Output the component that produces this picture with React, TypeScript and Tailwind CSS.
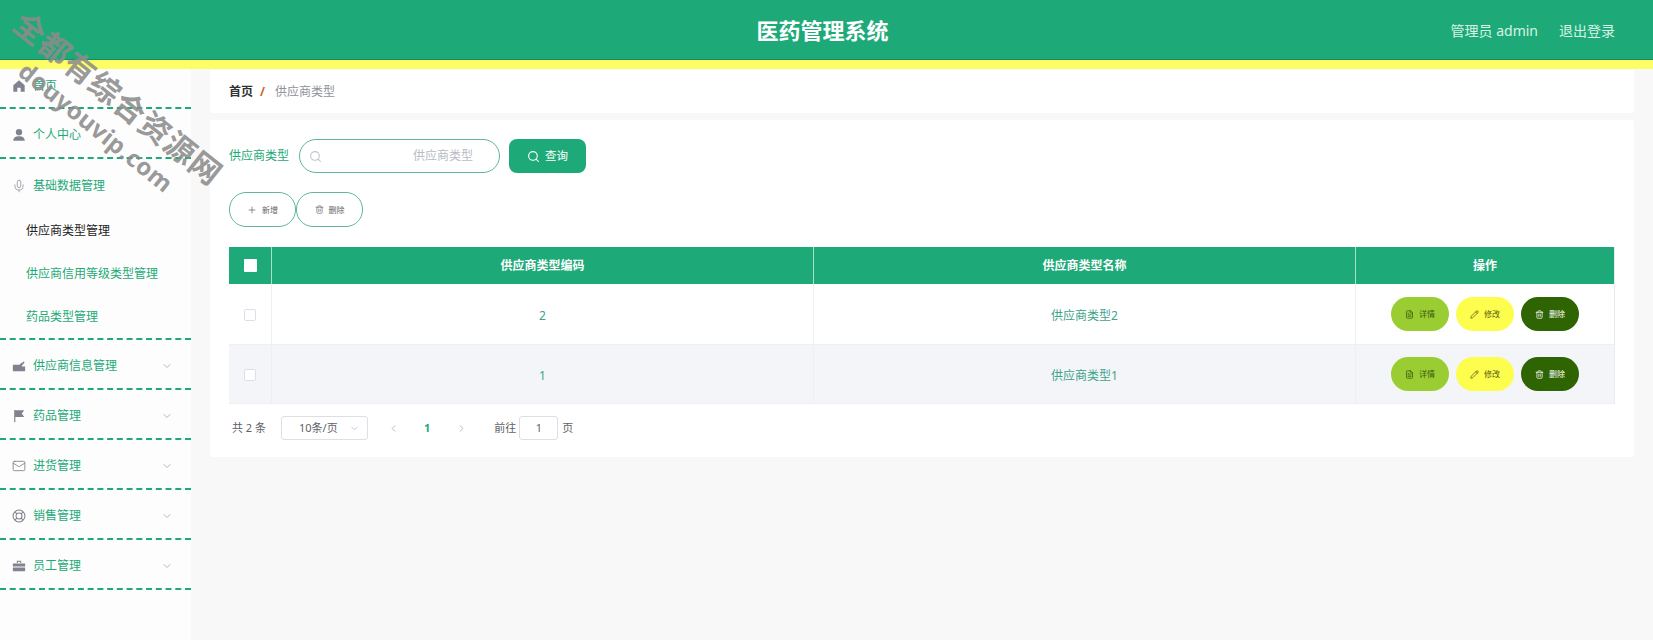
import { ChevronDown, ChevronLeft, ChevronRight, FileText, Mail, Mic, Pencil, Plus, Search, Trash2 } from "lucide-react";
import type { ReactNode } from "react";

function HomeIcon() {
  return (
    <svg viewBox="0 0 16 16" className="h-[14px] w-[14px]" fill="#80838f">
      <path d="M8 1.5 1.5 7v7.5h4.6V10h3.8v4.5h4.6V7z" />
    </svg>
  );
}
function UserIcon() {
  return (
    <svg viewBox="0 0 16 16" className="h-[14px] w-[14px]" fill="#80838f">
      <circle cx="8" cy="4.8" r="3.6" />
      <path d="M1.5 14.5c0-3.4 2.6-5 6.5-5s6.5 1.6 6.5 5z" />
    </svg>
  );
}
function CartIcon() {
  return (
    <svg viewBox="0 0 16 16" className="h-[14px] w-[14px]" fill="#80838f">
      <path d="M1 6.5h7.5L10 5l4-2.5v2L11.5 7v1.5H15V14H1z" />
    </svg>
  );
}
function FlagIcon() {
  return (
    <svg viewBox="0 0 16 16" className="h-[14px] w-[14px]" fill="#80838f">
      <path d="M2.5 1h1.3v14H2.5zM3.8 1.5H14l-2.8 3.6L14 9H3.8z" />
    </svg>
  );
}
function BuoyIcon() {
  return (
    <svg viewBox="0 0 16 16" className="h-[14px] w-[14px]" fill="none" stroke="#80838f" strokeWidth="1.2">
      <circle cx="8" cy="8" r="6.8" />
      <circle cx="8" cy="8" r="3.4" />
      <path d="m3.2 3.2 2.4 2.4m4.8 4.8 2.4 2.4m0-9.6-2.4 2.4m-4.8 4.8-2.4 2.4" />
    </svg>
  );
}
function CaseIcon() {
  return (
    <svg viewBox="0 0 16 16" className="h-[14px] w-[14px]" fill="#80838f">
      <path d="M5.5 2h5v2.6h-1.2V3.2H6.7v1.4H5.5zM1 5h14v3.6H1zM1 9.6h14V14H1z" />
    </svg>
  );
}

const lowerItems: { label: string; icon: ReactNode }[] = [
  { label: "供应商信息管理", icon: <CartIcon /> },
  { label: "药品管理", icon: <FlagIcon /> },
  { label: "进货管理", icon: <Mail size={14} color="#80838f" strokeWidth={1.5} /> },
  { label: "销售管理", icon: <BuoyIcon /> },
  { label: "员工管理", icon: <CaseIcon /> },
];

const subItems = ["供应商类型管理", "供应商信用等级类型管理", "药品类型管理"];

const rows = [
  { code: "2", name: "供应商类型2" },
  { code: "1", name: "供应商类型1" },
];

function SideRow({ label, icon, arrow, first }: { label: string; icon: ReactNode; arrow?: boolean; first?: boolean }) {
  return (
    <div
      className={`relative flex items-center border-b-2 border-dashed border-[#1eaa78] pl-3 ${
        first ? "h-[40px] pb-[5px]" : "h-[50px] pt-[3px]"
      }`}
    >
      <span className="flex w-[21px] justify-start">{icon}</span>
      <span className="text-[12px] text-[#1eaa78]">{label}</span>
      {arrow && <ChevronDown size={12} color="#b4b7bd" className="absolute right-[18px] top-[20px]" />}
    </div>
  );
}

function OutlineButton({ icon, label }: { icon: ReactNode; label: string }) {
  return (
    <button className="flex h-[35px] w-[67px] items-center justify-center gap-[5px] rounded-[17px] border border-[#5fb69a] bg-white text-[8px] text-[#666]">
      {icon}
      {label}
    </button>
  );
}

function ActionButton({ className, icon, label }: { className: string; icon: ReactNode; label: string }) {
  return (
    <button className={`flex h-[34px] w-[58px] items-center justify-center gap-[5px] rounded-[17px] text-[8px] ${className}`}>
      {icon}
      {label}
    </button>
  );
}

export default function App() {
  return (
    <div className="relative flex h-[640px] flex-col overflow-hidden bg-[#f8f8f9] font-['Noto_Sans','Noto_Sans_CJK_SC',sans-serif]">
      <header className="relative flex h-[69px] shrink-0 items-center justify-center border-b-[9px] border-[#fdfd66] bg-[#1eaa78] pr-[8px] shadow-[inset_0_-1px_0_#178a60]">
        <h1 className="text-[22px] font-bold text-white">医药管理系统</h1>
        <div className="absolute right-[38px] top-[20px] flex gap-[21px] text-[14px] text-[#d8f2e6]">
          <span>管理员 admin</span>
          <span>退出登录</span>
        </div>
      </header>

      <div className="flex min-h-0 flex-1">
        <aside className="w-[191px] shrink-0 bg-[#fdfdfd]">
          <SideRow first label="首页" icon={<HomeIcon />} />
          <SideRow label="个人中心" icon={<UserIcon />} />
          <div className="border-b-2 border-dashed border-[#1eaa78]">
            <div className="flex h-[50px] items-center pl-3 pt-[3px]">
              <span className="flex w-[21px]">
                <Mic size={14} color="#9a9da6" strokeWidth={1.5} />
              </span>
              <span className="text-[12px] text-[#1eaa78]">基础数据管理</span>
            </div>
            {subItems.map((s, i) => (
              <div
                key={s}
                className={`flex h-[43px] items-center pl-[26px] text-[12px] ${i === 0 ? "text-[#222]" : "text-[#1eaa78]"}`}
              >
                {s}
              </div>
            ))}
          </div>
          {lowerItems.map((it) => (
            <SideRow key={it.label} label={it.label} icon={it.icon} arrow />
          ))}
        </aside>

        <main className="min-w-0 flex-1 px-[19px]">
          <div className="mt-[1px] flex h-[43px] items-center rounded-b-[3px] bg-white pl-[19px] text-[12px]">
            <span className="font-bold text-[#303133]">首页</span>
            <span className="ml-[7px] mr-[10px] font-bold text-[#c8642d]">/</span>
            <span className="text-[#8f929a]">供应商类型</span>
          </div>

          <section className="mt-[7px] h-[337px] rounded-[3px] bg-white px-[19px] pt-[19px]">
            <div className="flex h-[34px] items-center">
              <span className="w-[70px] text-[12px] text-[#1eaa78]">供应商类型</span>
              <div className="flex h-[34px] w-[201px] items-center rounded-[17px] border border-[#5fb69a] pl-[9px] pr-[26px]">
                <Search size={13} color="#c0c4cc" />
                <span className="ml-auto text-[12px] text-[#b9bcc4]">供应商类型</span>
              </div>
              <button className="ml-[9px] flex h-[34px] w-[77px] items-center justify-center gap-[5px] rounded-[8px] bg-[#1eaa78] text-[11.5px] text-white">
                <Search size={13} color="#fff" />
                查询
              </button>
            </div>

            <div className="mt-[19px] flex">
              <OutlineButton icon={<Plus size={10} color="#777" />} label="新增" />
              <OutlineButton icon={<Trash2 size={9} color="#777" />} label="删除" />
            </div>

            <div className="mt-[20px] border-r border-[#e8ebf0]">
              <div className="flex h-[37px] items-stretch bg-[#1eaa78] text-[12px] font-bold text-white">
                <div className="flex w-[43px] items-center justify-center border-r border-[#a8e0ca]">
                  <span className="h-[13px] w-[13px] rounded-[1px] bg-white" />
                </div>
                <div className="flex w-[542px] items-center justify-center border-r border-[#a8e0ca]">供应商类型编码</div>
                <div className="flex w-[542px] items-center justify-center border-r border-[#a8e0ca]">供应商类型名称</div>
                <div className="flex flex-1 items-center justify-center">操作</div>
              </div>
              {rows.map((r, i) => (
                <div
                  key={r.code}
                  className={`flex items-stretch border-b border-[#edeff3] text-[12px] text-[#3fa388] ${
                    i === 0 ? "h-[61px] bg-white" : "h-[59px] bg-[#f3f5f8]"
                  }`}
                >
                  <div className="flex w-[43px] items-center justify-center border-r border-[#edeff3] pt-[1px]">
                    <span className="h-[12px] w-[12px] rounded-[2px] border border-[#dcdfe6] bg-white" />
                  </div>
                  <div className="flex w-[542px] items-center justify-center border-r border-[#edeff3] pt-[3px]">{r.code}</div>
                  <div className="flex w-[542px] items-center justify-center border-r border-[#edeff3] pt-[3px]">{r.name}</div>
                  <div className="flex flex-1 items-center justify-center gap-[7px]">
                    <ActionButton className="bg-[#9acd32] text-[#3c5a10]" icon={<FileText size={9} />} label="详情" />
                    <ActionButton className="bg-[#fdfd4e] text-[#5c5c10]" icon={<Pencil size={9} />} label="修改" />
                    <ActionButton className="bg-[#2f6403] text-white" icon={<Trash2 size={9} />} label="删除" />
                  </div>
                </div>
              ))}
            </div>

            <div className="mt-[12px] flex h-[24px] items-center text-[11px] text-[#606266]">
              <span className="ml-[3px]">共 2 条</span>
              <div className="ml-[15px] flex h-[24px] w-[87px] items-center justify-between rounded-[3px] border border-[#dcdfe6] pl-[17px] pr-[7px]">
                10条/页
                <ChevronDown size={11} color="#c0c4cc" />
              </div>
              <ChevronLeft size={11} color="#b0b3ba" className="ml-[20px]" />
              <span className="ml-[25px] font-bold text-[#1eaa78]">1</span>
              <ChevronRight size={11} color="#b0b3ba" className="ml-[26px]" />
              <span className="ml-[27px]">前往</span>
              <span className="ml-[3px] flex h-[24px] w-[39px] items-center justify-center rounded-[3px] border border-[#dcdfe6]">1</span>
              <span className="ml-[4px]">页</span>
            </div>
          </section>
        </main>
      </div>

      {/* watermark sits over the header and sidebar */}
      <div className="pointer-events-none absolute left-[-10px] top-[83px] w-[256px] rotate-[38.5deg] text-[31px] font-bold leading-none tracking-[1px] whitespace-nowrap text-[#8c8c8c]/90">
        全都有综合资源网
      </div>
      <div className="pointer-events-none absolute left-[1px] top-[115px] w-[190px] rotate-[39deg] text-[24px] font-bold leading-none tracking-[0.5px] whitespace-nowrap text-[#8c8c8c]/90">
        douyouvip.com
      </div>
    </div>
  );
}
